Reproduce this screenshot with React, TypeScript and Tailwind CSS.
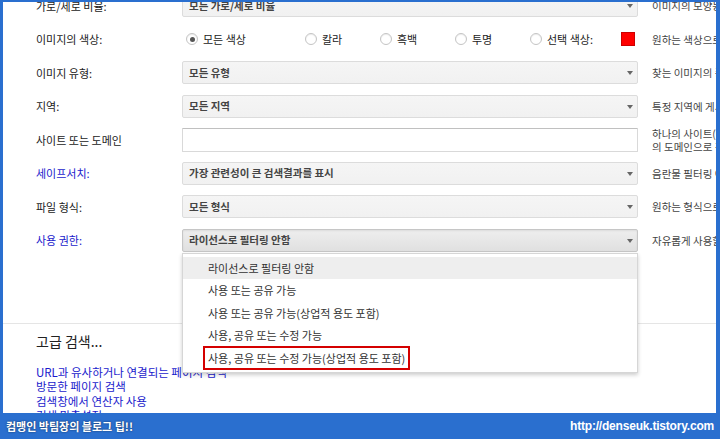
import React from 'react';

const KR = { fontFamily: '"Noto Sans CJK KR", "Liberation Sans", sans-serif' };

type Row = {
  label: string;
  blue?: boolean;
  kind: 'select' | 'radio' | 'input';
  value?: string;
  help: string[];
  active?: boolean;
};

const rows: Row[] = [
  { label: '가로/세로 비율:', kind: 'select', value: '모든 가로/세로 비율', help: ['이미지의 모양등'] },
  { label: '이미지의 색상:', kind: 'radio', help: ['원하는 색상으로'] },
  { label: '이미지 유형:', kind: 'select', value: '모든 유형', help: ['찾는 이미지의 종'] },
  { label: '지역:', kind: 'select', value: '모든 지역', help: ['특정 지역에 게시'] },
  { label: '사이트 또는 도메인', kind: 'input', help: ['하나의 사이트(예', '의 도메인으로 검'] },
  { label: '세이프서치:', blue: true, kind: 'select', value: '가장 관련성이 큰 검색결과를 표시', help: ['음란물 필터링 여'] },
  { label: '파일 형식:', kind: 'select', value: '모든 형식', help: ['원하는 형식으로'] },
  { label: '사용 권한:', blue: true, kind: 'select', value: '라이선스로 필터링 안함', help: ['자유롭게 사용할'], active: true },
];

const colors = [
  { label: '모든 색상', checked: true, w: 'w-[119px]' },
  { label: '칼라', w: 'w-[75px]' },
  { label: '흑백', w: 'w-[75px]' },
  { label: '투명', w: 'w-[75px]' },
];

const options = [
  '라이선스로 필터링 안함',
  '사용 또는 공유 가능',
  '사용 또는 공유 가능(상업적 용도 포함)',
  '사용, 공유 또는 수정 가능',
  '사용, 공유 또는 수정 가능(상업적 용도 포함)',
];

const Radio = ({ checked }: { checked?: boolean }) => (
  <span className="w-[12px] h-[12px] rounded-full border border-[#c4c4c4] bg-white flex items-center justify-center shadow-[inset_0_1px_1px_rgba(0,0,0,0.08)]">
    {checked && <span className="w-[5px] h-[5px] rounded-full bg-[#555]" />}
  </span>
);

const SelectBox = ({ value, active }: { value?: string; active?: boolean }) => (
  <div
    className={`relative h-[23px] w-full rounded-[2px] border flex items-center pl-[6px] ${
      active
        ? 'border-[#c6c6c6] bg-gradient-to-b from-[#eeeeee] to-[#e0e0e0] shadow-[inset_0_1px_2px_rgba(0,0,0,0.08)]'
        : 'border-[#dcdcdc] bg-gradient-to-b from-[#f5f5f5] to-[#f1f1f1]'
    }`}
  >
    <span className="text-[10.5px] font-bold text-[#444]">{value}</span>
    <span className="absolute right-[4px] top-[9px] w-0 h-0 border-l-[3.5px] border-r-[3.5px] border-t-[4px] border-l-transparent border-r-transparent border-t-[#666]" />
  </div>
);

export default function App() {
  return (
    <div className="w-[720px] h-[439px] overflow-hidden bg-[#2a6fcf] flex flex-col" style={KR}>
      <div className="relative flex-1 bg-white ml-[3px] mr-[4px] mt-[2px] overflow-hidden">
        <div className="-mt-[13px] -ml-[3px]">
          {rows.map((r) => (
            <div key={r.label} className="h-[33.5px] flex items-center">
              <div className={`w-[182px] shrink-0 pl-[36px] text-[11px] ${r.blue ? 'text-[#1a1acc]' : 'text-[#222]'}`}>{r.label}</div>
              <div className="w-[456px] shrink-0">
                {r.kind === 'select' && <SelectBox value={r.value} active={r.active} />}
                {r.kind === 'input' && (
                  <div className="h-[24px] w-full border border-[#d9d9d9] border-t-[#c0c0c0] bg-white rounded-[1px]" />
                )}
                {r.kind === 'radio' && (
                  <div className="flex items-center pl-[4px] text-[11px] text-[#222]">
                    {colors.map((c) => (
                      <div key={c.label} className={`flex items-center gap-[5px] ${c.w}`}>
                        <Radio checked={c.checked} />
                        <span>{c.label}</span>
                      </div>
                    ))}
                    <div className="flex items-center gap-[5px] w-[91px]">
                      <Radio />
                      <span>선택 색상:</span>
                    </div>
                    <span className="w-[14px] h-[14px] bg-[#ff0000] border border-[#c00]" />
                  </div>
                )}
              </div>
              <div className="pl-[14px] text-[10.5px] leading-[13px] text-[#444] whitespace-nowrap">
                {r.help.map((h) => (
                  <div key={h}>{h}</div>
                ))}
              </div>
            </div>
          ))}

          <div className="h-[66px]" />
          <div className="border-t border-[#e5e5e5]" />

          <div className="pl-[36px] pt-[8px] text-[14px] text-[#222] leading-[18px]">고급 검색...</div>
          <div className="pl-[36px] pt-[15px] text-[11.5px] leading-[14.4px] text-[#1a1acc]">
            <div>URL과 유사하거나 연결되는 페이지 검색</div>
            <div>방문한 페이지 검색</div>
            <div>검색창에서 연산자 사용</div>
            <div>검색 맞춤설정</div>
          </div>
        </div>

        {/* open dropdown list */}
        <div className="absolute left-[179px] top-[251px] w-[456px] bg-white border border-[#d6d6d6] shadow-[0_2px_4px_rgba(0,0,0,0.2)] py-[3px] text-[11px] text-[#333]">
          {options.map((o, i) => (
            <div key={o} className={`h-[22.4px] flex items-center pl-[25px] ${i === 0 ? 'bg-[#eeeeee]' : ''}`}>
              {i === options.length - 1 ? (
                <span className="-ml-[5px] px-[3px] py-[2px] border-2 border-[#d40000]">{o}</span>
              ) : (
                <span>{o}</span>
              )}
            </div>
          ))}
        </div>
      </div>

      <div className="h-[26px] flex items-center justify-between px-[6px] text-white">
        <span className="text-[11px] font-bold [text-shadow:0_0_2px_rgba(0,0,0,0.6)]">컴맹인 박팀장의 블로그 팁!!</span>
        <span className="text-[12px] font-bold tracking-[-0.2px]" style={{ fontFamily: '"Liberation Sans", sans-serif' }}>
          http://denseuk.tistory.com
        </span>
      </div>
    </div>
  );
}
